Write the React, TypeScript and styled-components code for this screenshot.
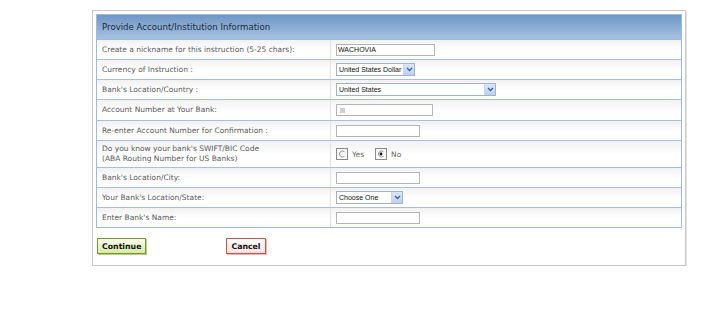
import React from "react";
import styled, { createGlobalStyle } from "styled-components";

const Global = createGlobalStyle`
  html, body { margin: 0; padding: 0; background: #fff; }
  body { font-family: "DejaVu Sans", Verdana, sans-serif; }
`;

const Panel = styled.div`
  margin: 10px 0 0 92px;
  width: 586px;
  height: 251px;
  border: 1px solid #c9c9c9;
  box-shadow: 1px 1px 0 #e4e4e4;
  padding: 3px 3px 0 3px;
  box-sizing: content-box;
`;

const Table = styled.div`
  width: 584px;
  border: 1px solid #9fb9d9;
  display: flex;
  flex-direction: column;
`;

const Header = styled.div`
  height: 24px;
  display: flex;
  align-items: center;
  padding-left: 5px;
  background: linear-gradient(#6f97c6, #a6c1df);
  border-bottom: 1px solid #9fb9d9;
  color: #1d2b3d;
  font-size: 8.6px;
`;

const Row = styled.div<{ $h?: number }>`
  display: grid;
  grid-template-columns: 234px 1fr;
  height: ${(p) => p.$h ?? 19}px;
  border-bottom: 1px solid #a9c0dd;
  background: linear-gradient(#f1f1f1, #ffffff 55%);
  &:last-child { border-bottom: none; }
`;

const Label = styled.div`
  display: flex;
  align-items: center;
  padding-left: 5px;
  color: #5a5a5a;
  font-size: 7.5px;
  line-height: 10px;
  border-right: 1px solid #e2e2e2;
`;

const Value = styled.div`
  display: flex;
  align-items: center;
  padding-left: 5px;
  gap: 5px;
`;

const TextInput = styled.div<{ $w: number }>`
  width: ${(p) => p.$w}px;
  height: 10px;
  border: 1px solid #b5b5b5;
  background: #fff;
  display: flex;
  align-items: center;
  padding-left: 1px;
  font-family: "Liberation Sans", Arial, sans-serif;
  font-size: 7px;
  color: #111;
  box-sizing: content-box;
`;

const Masked = styled.span`
  width: 5px;
  height: 5px;
  margin-left: 2px;
  background: #cfcfcf;
`;

const Select = styled.div<{ $w: number }>`
  width: ${(p) => p.$w}px;
  height: 11px;
  border: 1px solid #9fb3cf;
  background: #fff;
  display: flex;
  align-items: center;
  justify-content: space-between;
  font-family: "Liberation Sans", Arial, sans-serif;
  font-size: 7px;
  color: #111;
  box-sizing: content-box;
`;

const SelectText = styled.span`
  padding-left: 2px;
`;

const Arrow = styled.span`
  width: 10px;
  height: 11px;
  background: linear-gradient(#dbe6f6, #bcd0ee);
  border-left: 1px solid #c9d6ea;
  display: flex;
  align-items: center;
  justify-content: center;
`;

const RadioGroup = styled.label`
  display: flex;
  align-items: center;
  gap: 4px;
  font-size: 7.5px;
  color: #666;
  margin-right: 6px;
`;

const RadioBox = styled.span`
  width: 10px;
  height: 10px;
  border: 1px solid #8a8a8a;
  background: linear-gradient(#f4f4f4, #fff);
  display: flex;
  align-items: center;
  justify-content: center;
`;

const Buttons = styled.div`
  display: flex;
  gap: 80px;
  margin: 10px 0 0 1px;
`;

const Button = styled.div<{ $tone: "go" | "stop" }>`
  height: 14px;
  padding: 0 4px;
  display: flex;
  align-items: center;
  font-weight: bold;
  font-size: 7.8px;
  color: #111;
  border: 1px solid ${(p) => (p.$tone === "go" ? "#6f9a2c" : "#d0514a")};
  background: ${(p) =>
    p.$tone === "go"
      ? "linear-gradient(#fbfde9, #d7e9a6)"
      : "linear-gradient(#ffffff, #f7e3e1)"};
  box-shadow: 1px 1px 0 ${(p) => (p.$tone === "go" ? "#b6cf85" : "#efb6b2")};
`;

const Chevron = () => (
  <svg width="7" height="5" viewBox="0 0 7 5">
    <path d="M1 1 L3.5 3.5 L6 1" fill="none" stroke="#3b5f96" strokeWidth="1.3" />
  </svg>
);

const Radio = ({ checked }: { checked?: boolean }) => (
  <RadioBox>
    <svg width="8" height="8" viewBox="0 0 8 8">
      <path d="M6.5 1.8 A3 3 0 1 0 6.5 6.2" fill="none" stroke="#888" strokeWidth="0.9" />
      {checked && <circle cx="4" cy="4" r="1.4" fill="#111" />}
    </svg>
  </RadioBox>
);

export default function App() {
  return (
    <>
      <Global />
      <Panel>
        <Table>
          <Header>Provide Account/Institution Information</Header>
          <Row>
            <Label>Create a nickname for this instruction (5-25 chars):</Label>
            <Value>
              <TextInput $w={96}>WACHOVIA</TextInput>
            </Value>
          </Row>
          <Row>
            <Label>Currency of Instruction :</Label>
            <Value>
              <Select $w={77}>
                <SelectText>United States Dollar</SelectText>
                <Arrow><Chevron /></Arrow>
              </Select>
            </Value>
          </Row>
          <Row>
            <Label>Bank's Location/Country :</Label>
            <Value>
              <Select $w={158}>
                <SelectText>United States</SelectText>
                <Arrow><Chevron /></Arrow>
              </Select>
            </Value>
          </Row>
          <Row $h={20}>
            <Label>Account Number at Your Bank:</Label>
            <Value>
              <TextInput $w={94}><Masked /></TextInput>
            </Value>
          </Row>
          <Row>
            <Label>Re-enter Account Number for Confirmation :</Label>
            <Value>
              <TextInput $w={81} />
            </Value>
          </Row>
          <Row $h={26}>
            <Label>
              Do you know your bank's SWIFT/BIC Code
              <br />
              (ABA Routing Number for US Banks)
            </Label>
            <Value>
              <RadioGroup><Radio />Yes</RadioGroup>
              <RadioGroup><Radio checked />No</RadioGroup>
            </Value>
          </Row>
          <Row>
            <Label>Bank's Location/City:</Label>
            <Value>
              <TextInput $w={81} />
            </Value>
          </Row>
          <Row>
            <Label>Your Bank's Location/State:</Label>
            <Value>
              <Select $w={65}>
                <SelectText>Choose One</SelectText>
                <Arrow><Chevron /></Arrow>
              </Select>
            </Value>
          </Row>
          <Row>
            <Label>Enter Bank's Name:</Label>
            <Value>
              <TextInput $w={81} />
            </Value>
          </Row>
        </Table>
        <Buttons>
          <Button $tone="go">Continue</Button>
          <Button $tone="stop">Cancel</Button>
        </Buttons>
      </Panel>
    </>
  );
}
